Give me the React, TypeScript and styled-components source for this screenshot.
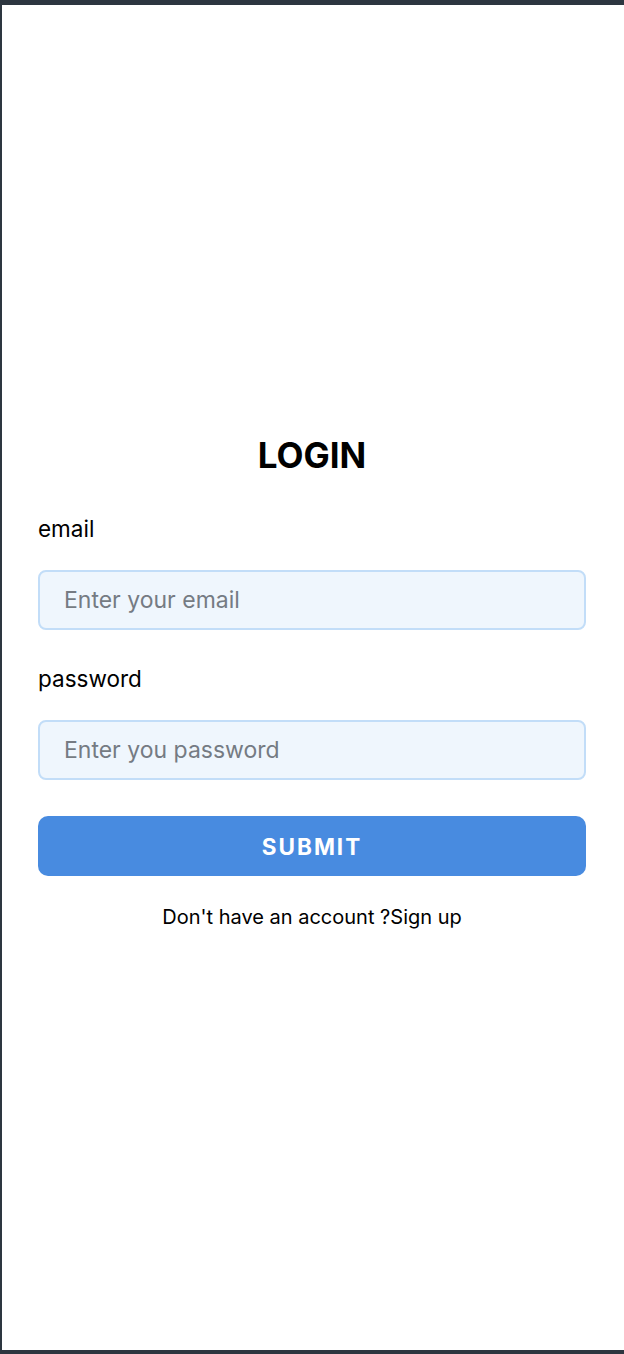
import styled, { createGlobalStyle } from "styled-components";
import React, { useState } from "react";

const GlobalStyle = createGlobalStyle`
  * {
    box-sizing: border-box;
  }
  html, body {
    margin: 0;
    padding: 0;
    background: #ffffff;
  }
  body {
    font-family: Inter, "Noto Sans", "Liberation Sans", sans-serif;
    color: #000000;
  }
`;

const Page = styled.div`
  min-height: 100vh;
  padding-top: 10px;
  display: flex;
  align-items: center;
  justify-content: center;
  box-shadow: inset 2px 5px 0 #2d3640, inset 0 -4px 0 #2d3640;
`;

const Form = styled.form`
  width: 548px;
  display: flex;
  flex-direction: column;
`;

const Title = styled.h1`
  margin: 0 0 40px;
  font-size: 35px;
  line-height: 40px;
  font-weight: 700;
  text-align: center;
`;

const Label = styled.label`
  display: block;
  font-size: 22.5px;
  line-height: 28px;
  margin-bottom: 27px;
`;

const Field = styled.div`
  display: flex;
  flex-direction: column;
  margin-bottom: 35px;
`;

const Input = styled.input`
  height: 60px;
  width: 100%;
  padding: 0 24px;
  border: 2px solid #c2ddf8;
  border-radius: 8px;
  background: #eff6fd;
  font-family: inherit;
  font-size: 23px;
  color: #000;
  &::placeholder {
    color: #757b83;
  }
  &:focus {
    outline: none;
    border-color: #478ade;
  }
`;

const SubmitBtn = styled.button`
  height: 60px;
  margin-top: 1px;
  border: none;
  border-radius: 10px;
  background: #488be0;
  color: #ffffff;
  font-family: inherit;
  font-size: 22.5px;
  font-weight: 700;
  letter-spacing: 2px;
  cursor: pointer;
  &:hover {
    opacity: 0.9;
  }
`;

const Footer = styled.p`
  margin: 29px 0 0;
  font-size: 20px;
  line-height: 24px;
  text-align: center;
`;

const SignUp = styled.a`
  color: inherit;
  text-decoration: none;
  cursor: pointer;
`;

export default function App() {
  const [email, setEmail] = useState("");
  const [password, setPassword] = useState("");

  const onSubmit = (e: React.FormEvent<HTMLFormElement>) => {
    e.preventDefault();
  };

  return (
    <>
      <GlobalStyle />
      <Page>
        <Form onSubmit={onSubmit}>
          <Title>LOGIN</Title>
          <Field>
            <Label htmlFor="email">email</Label>
            <Input
              id="email"
              type="email"
              value={email}
              onChange={(e) => setEmail(e.target.value)}
              placeholder="Enter your email"
            />
          </Field>
          <Field>
            <Label htmlFor="password">password</Label>
            <Input
              id="password"
              type="password"
              value={password}
              onChange={(e) => setPassword(e.target.value)}
              placeholder="Enter you password"
            />
          </Field>
          <SubmitBtn type="submit">SUBMIT</SubmitBtn>
          <Footer>
            Don't have an account ?<SignUp>Sign up</SignUp>
          </Footer>
        </Form>
      </Page>
    </>
  );
}
